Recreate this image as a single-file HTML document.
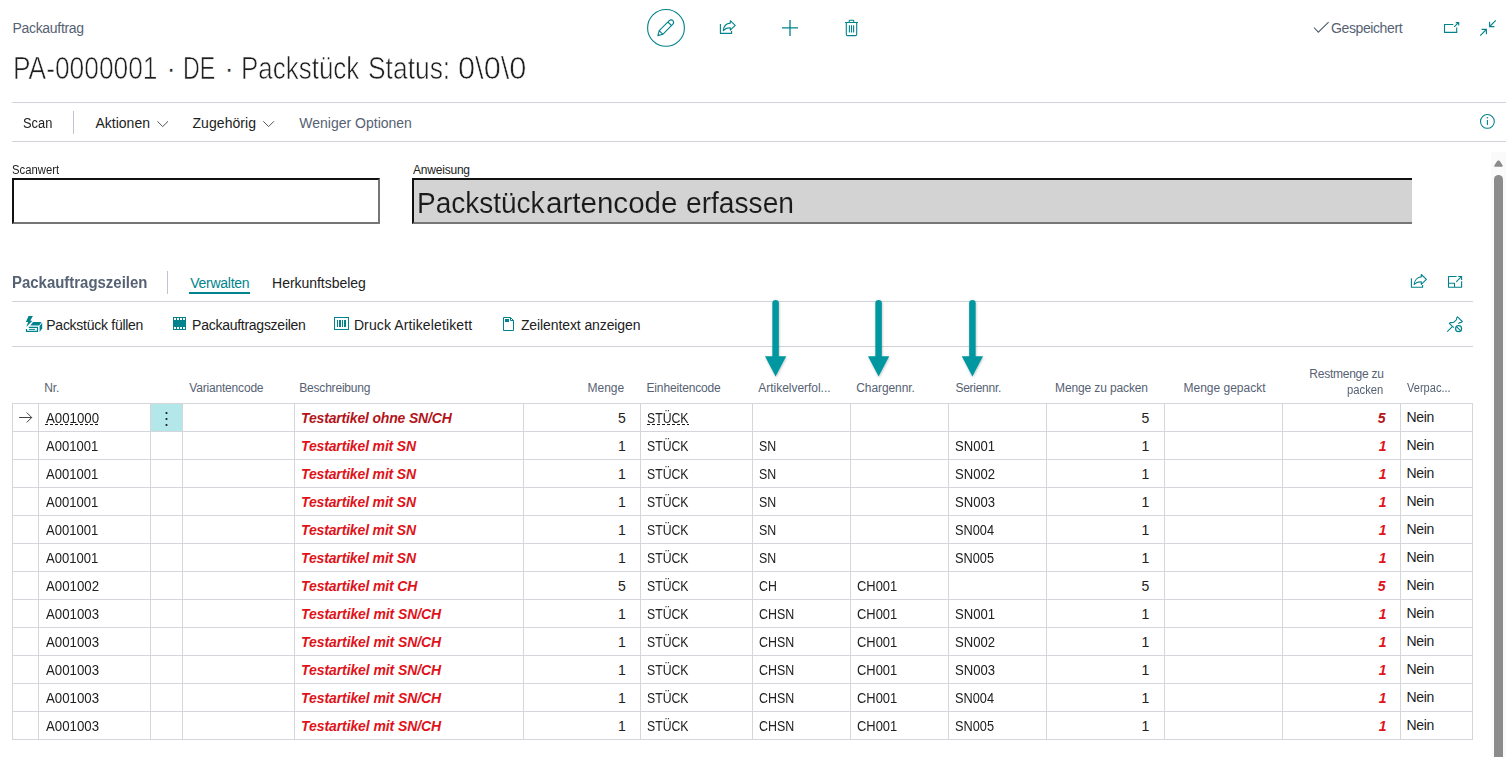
<!DOCTYPE html>
<html lang="de"><head><meta charset="utf-8"><title>Packauftrag</title>
<style>
html,body{margin:0;padding:0;background:#fff;}
body{width:1510px;height:757px;overflow:hidden;font-family:"Liberation Sans",sans-serif;}
#page{position:relative;width:1510px;height:757px;overflow:hidden;background:#fff;}
.t{position:absolute;white-space:nowrap;line-height:normal;}
.nt{position:absolute;}
.hl{position:absolute;height:1px;background:#d3d6db;}
.vl{position:absolute;width:1px;background:#d3d6db;}
svg{position:absolute;overflow:visible;}
.title{-webkit-text-stroke:0.6px #fff;}
h1{margin:0;font-weight:400;font-size:30px}
.ul{position:absolute;height:1px;background:repeating-linear-gradient(90deg,#1a1a1a 0,#1a1a1a 3px,transparent 3px,transparent 5px);}

.big{-webkit-text-stroke:0.12px #d3d3d3;}

</style></head>
<body>
<div id="page">
<div class="nt hl" style="left:12px;top:102px;width:1494px;background:#d0d3da"></div>
<div class="nt hl" style="left:12px;top:141px;width:1494px;background:#d0d3da"></div>
<div class="nt vl" style="left:73px;top:111px;height:23px;background:#bfc4ce"></div>
<div class="nt vl" style="left:167px;top:271px;height:23px;background:#bfc4ce"></div>
<div class="nt hl" style="left:12px;top:301px;width:1461px;background:#d0d3da"></div>
<div class="nt hl" style="left:12px;top:346px;width:1461px;background:#d0d3da"></div>
<div class="nt" style="left:189px;top:292px;width:61px;height:2px;background:#00838c"></div>
<div class="nt" style="left:12px;top:178px;width:364px;height:42px;border-style:solid;border-width:2px;border-color:#111 #767676 #767676 #111;background:#fff"></div>
<div class="nt" style="left:412px;top:178px;width:998px;height:42px;border-style:solid;border-width:2px 0 2px 2px;border-color:#111 #767676 #767676 #111;background:#d3d3d3"></div>
<div class="nt" style="left:151px;top:404px;width:31px;height:27px;background:#b4e7ea"></div>
<div class="nt hl" style="left:12px;top:403px;width:1461px"></div>
<div class="nt hl" style="left:12px;top:431px;width:1461px"></div>
<div class="nt hl" style="left:12px;top:459px;width:1461px"></div>
<div class="nt hl" style="left:12px;top:487px;width:1461px"></div>
<div class="nt hl" style="left:12px;top:515px;width:1461px"></div>
<div class="nt hl" style="left:12px;top:543px;width:1461px"></div>
<div class="nt hl" style="left:12px;top:571px;width:1461px"></div>
<div class="nt hl" style="left:12px;top:599px;width:1461px"></div>
<div class="nt hl" style="left:12px;top:627px;width:1461px"></div>
<div class="nt hl" style="left:12px;top:655px;width:1461px"></div>
<div class="nt hl" style="left:12px;top:683px;width:1461px"></div>
<div class="nt hl" style="left:12px;top:711px;width:1461px"></div>
<div class="nt hl" style="left:12px;top:739px;width:1461px"></div>
<div class="nt vl" style="left:12px;top:403px;height:337px"></div>
<div class="nt vl" style="left:38px;top:403px;height:337px"></div>
<div class="nt vl" style="left:150px;top:403px;height:337px"></div>
<div class="nt vl" style="left:182px;top:403px;height:337px"></div>
<div class="nt vl" style="left:294px;top:403px;height:337px"></div>
<div class="nt vl" style="left:523px;top:403px;height:337px"></div>
<div class="nt vl" style="left:640px;top:403px;height:337px"></div>
<div class="nt vl" style="left:752px;top:403px;height:337px"></div>
<div class="nt vl" style="left:850px;top:403px;height:337px"></div>
<div class="nt vl" style="left:948px;top:403px;height:337px"></div>
<div class="nt vl" style="left:1046px;top:403px;height:337px"></div>
<div class="nt vl" style="left:1164px;top:403px;height:337px"></div>
<div class="nt vl" style="left:1282px;top:403px;height:337px"></div>
<div class="nt vl" style="left:1400px;top:403px;height:337px"></div>
<div class="nt vl" style="left:1472px;top:403px;height:337px"></div>
<div class="nt ul" style="left:45px;top:424px;width:54px"></div>
<div class="nt ul" style="left:647px;top:424px;width:42px"></div>
<svg class="nt" style="left:0;top:0" width="1510" height="757" viewBox="0 0 1510 757" fill="none">
<defs><filter id="sh" x="-50%" y="-10%" width="200%" height="130%"><feDropShadow dx="0.5" dy="1" stdDeviation="1" flood-color="#000" flood-opacity="0.25"/></filter></defs>
<g stroke="#444" stroke-width="1" stroke-linecap="round" stroke-linejoin="round"><path d="M19.5 417.5H31.5M27 412.8L31.7 417.5L27 422.2"/></g>
<g fill="#1a1a1a"><circle cx="166.5" cy="413" r="1.1"/><circle cx="166.5" cy="419" r="1.1"/><circle cx="166.5" cy="425" r="1.1"/></g>
<rect x="1491" y="152" width="15" height="605" fill="#fafafa"/>
<path d="M1495 166L1497.9 161.3H1499.1L1502 166Z" fill="#8b8b8b" stroke="#8b8b8b" stroke-width="1.6" stroke-linejoin="round"/>
<rect x="1494" y="175" width="9" height="600" rx="4.5" fill="#8b8b8b"/>
<g filter="url(#sh)"><path d="M775.6 303.2V360" stroke="#0097a0" stroke-width="6.5" stroke-linecap="round"/><path d="M765.0 356.3H786.2L775.6 376.6Z" fill="#0097a0"/></g>
<g filter="url(#sh)"><path d="M878.6 303.2V360" stroke="#0097a0" stroke-width="6.5" stroke-linecap="round"/><path d="M868.0 356.3H889.2L878.6 376.6Z" fill="#0097a0"/></g>
<g filter="url(#sh)"><path d="M972.4 303.2V360" stroke="#0097a0" stroke-width="6.5" stroke-linecap="round"/><path d="M961.8 356.3H983.0L972.4 376.6Z" fill="#0097a0"/></g>
<g stroke="#00838c" stroke-width="1.1" stroke-linejoin="round" stroke-linecap="round">
<circle cx="666" cy="27.9" r="18.4"/>
<path d="M657.9 35.6L659.2 30.7L669.3 20.6A2.5 2.5 0 0 1 672.9 24.2L662.8 34.3ZM659.2 30.7L662.8 34.3M667.9 22L671.5 25.6"/>
</g>
<g stroke="#00838c" stroke-width="1.1" stroke-linejoin="round">
<path d="M720.4 24V33.4H731.6V31"/>
<path d="M723.3 30.6C723.6 26.2 726.6 23.4 730.3 23.1V20.7L735.2 25.4L730.3 30.1V27.7C727.3 27.6 724.9 28.6 723.3 30.6Z"/>
<path d="M782 27.9H798M790 19.9V35.9" stroke-width="1.3"/>
<path d="M845 22.5H858M849.2 22.5V20.9Q849.2 20.2 849.9 20.2H853.1Q853.8 20.2 853.8 20.9V22.5M846.3 22.5V34.2Q846.3 35.6 847.7 35.6H855.3Q856.7 35.6 856.7 34.2V22.5M849.4 25.2V32.6M851.5 25.2V32.6M853.6 25.2V32.6"/>
</g>
<path d="M1314 27.5L1318.3 32.2L1328.6 22.2" stroke="#505c6d" stroke-width="1.1"/>
<g stroke="#00838c" stroke-width="1.1">
<path d="M1453.3 24.5H1444.5V32.4H1456.7V27.6M1454.2 26.8L1458.5 22.7M1455.7 22.6H1458.7V25.5"/>
<path d="M1495.8 20.3L1489.6 26.5M1489.6 21.8V26.6H1494.4"/><path d="M1480.2 35.7L1486.4 29.5M1481.6 29.4H1486.4V34.2"/>
<circle cx="1487.4" cy="121.4" r="6.9" stroke-width="1.05"/><path d="M1487.4 120V125" stroke-width="1.1"/><circle cx="1487.4" cy="117.7" r="0.8" fill="#00838c" stroke="none"/>
</g>
<g stroke="#555" stroke-width="1"><path d="M157.4 121.3L162.7 126.6L168 121.3"/><path d="M263.3 121.3L268.6 126.6L273.9 121.3"/></g>
<g stroke="#00838c" stroke-width="1.1" stroke-linejoin="round">
<path d="M1411.4 278.2V287.3H1422.6V285"/><path d="M1414.2 284.4C1414.5 280 1417.6 277.2 1421.3 276.9V274.5L1426.4 279.4L1421.3 284.3V281.7C1418.3 281.6 1415.8 282.4 1414.2 284.4Z"/>
<path d="M1456.6 276.5H1448.5V287.3H1461.6V281.3M1458.2 276.5H1461.6V279.9M1456.2 281.8L1461.4 276.7M1448.5 283.2H1454.5V287.3"/>
<path d="M1458.2 323.6C1459.5 322.7 1460.5 322.4 1461.4 322.4L1462.3 321.5L1457.5 316.9L1456.7 317.8C1456.8 318.8 1456.7 319.4 1456.3 319.9L1453.7 322.3C1452.5 322.7 1451.2 322.6 1450.2 322.6L1449.3 323.4L1453.8 327.7M1452.1 326.9L1447.2 331.6"/><circle cx="1458.6" cy="328.7" r="3" stroke-width="1.2"/><path d="M1456.4 326.6L1460.8 330.8"/>
</g>
<g fill="#00838c">
<path d="M28.5 315.9H32.9L30.3 320.5L32.2 320.9L26.2 326.9L28.2 321.9H25.9Z"/>
<path d="M33 322.1H41.5L39.2 325.4H30.4Z"/><path d="M42.2 322.7V328.5L39.6 331.9V326.1Z"/>
<path d="M26.5 328.9V331.4H37.5V327.4H28.8" fill="none" stroke="#00838c" stroke-width="1.2"/><path d="M29.1 329.4H35" fill="none" stroke="#00838c" stroke-width="1"/>
<path d="M173 317H186V330H173ZM174 318h2v2h-2ZM177 318h2v2h-2ZM180 318h2v2h-2ZM183 318h2v2h-2ZM174 327h2v2h-2ZM177 327h2v2h-2ZM180 327h2v2h-2ZM183 327h2v2h-2Z" fill-rule="evenodd"/>
<path d="M337 320h1v7h-1ZM339 320h2v7h-2ZM342 320h1v7h-1ZM344 320h2v7h-2Z"/>
<rect x="505" y="319" width="4" height="3"/>
</g>
<g stroke="#00838c" stroke-width="1">
<rect x="334.5" y="317.5" width="14" height="12"/>
<path d="M503.5 317.5H510.5L513.5 320.5V330.5H503.5ZM510.5 317.5V320.5H513.5"/>
</g>
</svg>
<span id="t0" class="t " style="top:20.00px;font-size:14.00px;color:#566273;left:12.50px;letter-spacing:-0.315px;">Packauftrag</span>
<h1 class="nt0"><span id="t1" class="t title sx" style="top:51.00px;font-size:31.00px;color:#1f1f1f;left:13.30px;transform:scaleX(0.8495);transform-origin:0 50%;">PA-0000001</span>
<span id="t2" class="t title" style="top:51.00px;font-size:31.00px;color:#1f1f1f;left:166.10px;">·</span>
<span id="t3" class="t title sx" style="top:51.00px;font-size:31.00px;color:#1f1f1f;left:183.30px;transform:scaleX(0.7491);transform-origin:0 50%;">DE</span>
<span id="t4" class="t title" style="top:51.00px;font-size:31.00px;color:#1f1f1f;left:223.90px;">·</span>
<span id="t5" class="t title sx" style="top:51.00px;font-size:31.00px;color:#1f1f1f;left:241.10px;transform:scaleX(0.8371);transform-origin:0 50%;">Packstück</span>
<span id="t6" class="t title sx" style="top:51.00px;font-size:31.00px;color:#1f1f1f;left:368.30px;transform:scaleX(0.8518);transform-origin:0 50%;">Status:</span>
<span id="t7" class="t title sx" style="top:51.00px;font-size:31.00px;color:#1f1f1f;left:458.10px;transform:scaleX(0.9928);transform-origin:0 50%;">0\0\0</span></h1>
<span id="t8" class="t sx" style="top:115.00px;font-size:14.00px;color:#212121;left:22.50px;transform:scaleX(0.9199);transform-origin:0 50%;">Scan</span>
<span id="t9" class="t " style="top:115.00px;font-size:14.00px;color:#212121;left:95.50px;">Aktionen</span>
<span id="t10" class="t " style="top:115.00px;font-size:14.00px;color:#212121;left:192.50px;letter-spacing:0.056px;">Zugehörig</span>
<span id="t11" class="t " style="top:115.00px;font-size:14.00px;color:#566273;left:299.30px;letter-spacing:0.000px;">Weniger Optionen</span>
<span id="t12" class="t " style="top:20.00px;font-size:14.00px;color:#566273;left:1331.10px;letter-spacing:-0.405px;">Gespeichert</span>
<span id="t13" class="t " style="top:163.00px;font-size:12.00px;color:#212121;left:12.10px;transform:scaleX(0.9413);transform-origin:0 50%;">Scanwert</span>
<span id="t14" class="t " style="top:163.00px;font-size:12.00px;color:#212121;left:413.10px;letter-spacing:-0.225px;">Anweisung</span>
<div class="nt0"><span id="t15" class="t big sx" style="top:186.00px;font-size:30.00px;color:#1a1a1a;left:416.90px;transform:scaleX(0.9333);transform-origin:0 50%;">Packstück</span><span id="t16" class="t big sx" style="top:186.00px;font-size:30.00px;color:#1a1a1a;left:545.90px;transform:scaleX(0.9850);transform-origin:0 50%;">artencode</span>
<span id="t17" class="t big sx" style="top:186.00px;font-size:30.00px;color:#1a1a1a;left:686.10px;transform:scaleX(0.9381);transform-origin:0 50%;">erfassen</span></div>
<span id="t18" class="t " style="top:274.00px;font-size:16.00px;color:#566273;left:12.10px;transform:scaleX(0.9339);transform-origin:0 50%;font-weight:700;">Packauftragszeilen</span>
<span id="t19" class="t " style="top:275.00px;font-size:14.00px;color:#00838c;left:190.30px;letter-spacing:-0.281px;">Verwalten</span>
<span id="t20" class="t " style="top:275.00px;font-size:14.00px;color:#212121;left:272.10px;letter-spacing:-0.035px;">Herkunftsbeleg</span>
<span id="t21" class="t " style="top:317.00px;font-size:14.00px;color:#212121;left:46.30px;letter-spacing:-0.270px;">Packstück füllen</span>
<span id="t22" class="t " style="top:317.00px;font-size:14.00px;color:#212121;left:192.10px;letter-spacing:-0.265px;">Packauftragszeilen</span>
<span id="t23" class="t " style="top:317.00px;font-size:14.00px;color:#212121;left:353.90px;letter-spacing:0.118px;">Druck Artikeletikett</span>
<span id="t24" class="t " style="top:317.00px;font-size:14.00px;color:#212121;left:520.90px;letter-spacing:-0.100px;">Zeilentext anzeigen</span>
<span id="t25" class="t h" style="top:381.00px;font-size:12.00px;color:#566273;left:44.30px;letter-spacing:-0.114px;">Nr.</span>
<span id="t26" class="t h" style="top:381.00px;font-size:12.00px;color:#566273;left:189.30px;letter-spacing:-0.188px;">Variantencode</span>
<span id="t27" class="t h" style="top:381.00px;font-size:12.00px;color:#566273;left:299.30px;letter-spacing:-0.205px;">Beschreibung</span>
<span id="t28" class="t h" style="top:381.00px;font-size:12.00px;color:#566273;left:587.50px;letter-spacing:0.000px;">Menge</span>
<span id="t29" class="t h" style="top:381.00px;font-size:12.00px;color:#566273;left:646.50px;letter-spacing:-0.150px;">Einheitencode</span>
<span id="t30" class="t h" style="top:381.00px;font-size:12.00px;color:#566273;left:758.30px;letter-spacing:-0.030px;">Artikelverfol...</span>
<span id="t31" class="t h" style="top:381.00px;font-size:12.00px;color:#566273;left:856.30px;letter-spacing:-0.100px;">Chargennr.</span>
<span id="t32" class="t h" style="top:381.00px;font-size:12.00px;color:#566273;left:955.50px;letter-spacing:-0.281px;">Seriennr.</span>
<span id="t33" class="t h" style="top:381.00px;font-size:12.00px;color:#566273;left:1055.10px;letter-spacing:-0.129px;">Menge zu packen</span>
<span id="t34" class="t h" style="top:381.00px;font-size:12.00px;color:#566273;left:1183.50px;">Menge gepackt</span>
<span id="t35" class="t h" style="top:367.00px;font-size:12.00px;color:#566273;left:1309.30px;letter-spacing:-0.245px;">Restmenge zu</span>
<span id="t36" class="t h" style="top:383.00px;font-size:12.00px;color:#566273;left:1346.90px;transform:scaleX(0.9385);transform-origin:0 50%;">packen</span>
<span id="t37" class="t h" style="top:381.00px;font-size:12.00px;color:#566273;left:1407.10px;transform:scaleX(0.9208);transform-origin:0 50%;">Verpac...</span>
<span id="t38" class="t c" style="top:410.00px;font-size:14.00px;color:#212121;left:45.90px;transform:scaleX(0.9475);transform-origin:0 50%;">A001000</span>
<span id="t39" class="t d" style="top:410.00px;font-size:14.00px;color:#b3151a;left:301.10px;letter-spacing:-0.171px;font-weight:700;font-style:italic;">Testartikel ohne SN/CH</span>
<span id="t40" class="t n" style="top:410.00px;font-size:14.00px;color:#212121;right:884.30px;">5</span>
<span id="t41" class="t c" style="top:410.00px;font-size:14.00px;color:#212121;left:647.30px;transform:scaleX(0.8755);transform-origin:0 50%;">STÜCK</span>
<span id="t42" class="t n" style="top:410.00px;font-size:14.00px;color:#212121;right:360.70px;">5</span>
<span id="t43" class="t rn" style="top:410.00px;font-size:14.00px;color:#b3151a;right:124.50px;font-weight:700;font-style:italic;">5</span>
<span id="t44" class="t c" style="top:409.00px;font-size:14.00px;color:#212121;left:1406.50px;letter-spacing:-0.300px;">Nein</span>
<span id="t45" class="t c" style="top:438.00px;font-size:14.00px;color:#212121;left:45.90px;transform:scaleX(0.9322);transform-origin:0 50%;">A001001</span>
<span id="t46" class="t d" style="top:438.00px;font-size:14.00px;color:#e0131a;left:301.10px;letter-spacing:-0.159px;font-weight:700;font-style:italic;">Testartikel mit SN</span>
<span id="t47" class="t n" style="top:438.00px;font-size:14.00px;color:#212121;right:884.30px;">1</span>
<span id="t48" class="t c" style="top:438.00px;font-size:14.00px;color:#212121;left:647.30px;transform:scaleX(0.8755);transform-origin:0 50%;">STÜCK</span>
<span id="t49" class="t c" style="top:438.00px;font-size:14.00px;color:#212121;left:759.10px;transform:scaleX(0.8842);transform-origin:0 50%;">SN</span>
<span id="t50" class="t c" style="top:438.00px;font-size:14.00px;color:#212121;left:954.70px;transform:scaleX(0.9356);transform-origin:0 50%;">SN001</span>
<span id="t51" class="t n" style="top:438.00px;font-size:14.00px;color:#212121;right:360.70px;">1</span>
<span id="t52" class="t rn" style="top:438.00px;font-size:14.00px;color:#e0131a;right:123.50px;font-weight:700;font-style:italic;">1</span>
<span id="t53" class="t c" style="top:437.00px;font-size:14.00px;color:#212121;left:1406.50px;letter-spacing:-0.300px;">Nein</span>
<span id="t54" class="t c" style="top:466.00px;font-size:14.00px;color:#212121;left:45.90px;transform:scaleX(0.9322);transform-origin:0 50%;">A001001</span>
<span id="t55" class="t d" style="top:466.00px;font-size:14.00px;color:#e0131a;left:301.10px;letter-spacing:-0.159px;font-weight:700;font-style:italic;">Testartikel mit SN</span>
<span id="t56" class="t n" style="top:466.00px;font-size:14.00px;color:#212121;right:884.30px;">1</span>
<span id="t57" class="t c" style="top:466.00px;font-size:14.00px;color:#212121;left:647.30px;transform:scaleX(0.8755);transform-origin:0 50%;">STÜCK</span>
<span id="t58" class="t c" style="top:466.00px;font-size:14.00px;color:#212121;left:759.10px;transform:scaleX(0.8842);transform-origin:0 50%;">SN</span>
<span id="t59" class="t c" style="top:466.00px;font-size:14.00px;color:#212121;left:954.70px;transform:scaleX(0.9356);transform-origin:0 50%;">SN002</span>
<span id="t60" class="t n" style="top:466.00px;font-size:14.00px;color:#212121;right:360.70px;">1</span>
<span id="t61" class="t rn" style="top:466.00px;font-size:14.00px;color:#e0131a;right:123.50px;font-weight:700;font-style:italic;">1</span>
<span id="t62" class="t c" style="top:465.00px;font-size:14.00px;color:#212121;left:1406.50px;letter-spacing:-0.300px;">Nein</span>
<span id="t63" class="t c" style="top:494.00px;font-size:14.00px;color:#212121;left:45.90px;transform:scaleX(0.9322);transform-origin:0 50%;">A001001</span>
<span id="t64" class="t d" style="top:494.00px;font-size:14.00px;color:#e0131a;left:301.10px;letter-spacing:-0.159px;font-weight:700;font-style:italic;">Testartikel mit SN</span>
<span id="t65" class="t n" style="top:494.00px;font-size:14.00px;color:#212121;right:884.30px;">1</span>
<span id="t66" class="t c" style="top:494.00px;font-size:14.00px;color:#212121;left:647.30px;transform:scaleX(0.8755);transform-origin:0 50%;">STÜCK</span>
<span id="t67" class="t c" style="top:494.00px;font-size:14.00px;color:#212121;left:759.10px;transform:scaleX(0.8842);transform-origin:0 50%;">SN</span>
<span id="t68" class="t c" style="top:494.00px;font-size:14.00px;color:#212121;left:954.70px;transform:scaleX(0.9356);transform-origin:0 50%;">SN003</span>
<span id="t69" class="t n" style="top:494.00px;font-size:14.00px;color:#212121;right:360.70px;">1</span>
<span id="t70" class="t rn" style="top:494.00px;font-size:14.00px;color:#e0131a;right:123.50px;font-weight:700;font-style:italic;">1</span>
<span id="t71" class="t c" style="top:493.00px;font-size:14.00px;color:#212121;left:1406.50px;letter-spacing:-0.300px;">Nein</span>
<span id="t72" class="t c" style="top:522.00px;font-size:14.00px;color:#212121;left:45.90px;transform:scaleX(0.9322);transform-origin:0 50%;">A001001</span>
<span id="t73" class="t d" style="top:522.00px;font-size:14.00px;color:#e0131a;left:301.10px;letter-spacing:-0.159px;font-weight:700;font-style:italic;">Testartikel mit SN</span>
<span id="t74" class="t n" style="top:522.00px;font-size:14.00px;color:#212121;right:884.30px;">1</span>
<span id="t75" class="t c" style="top:522.00px;font-size:14.00px;color:#212121;left:647.30px;transform:scaleX(0.8755);transform-origin:0 50%;">STÜCK</span>
<span id="t76" class="t c" style="top:522.00px;font-size:14.00px;color:#212121;left:759.10px;transform:scaleX(0.8842);transform-origin:0 50%;">SN</span>
<span id="t77" class="t c" style="top:522.00px;font-size:14.00px;color:#212121;left:954.70px;transform:scaleX(0.9116);transform-origin:0 50%;">SN004</span>
<span id="t78" class="t n" style="top:522.00px;font-size:14.00px;color:#212121;right:360.70px;">1</span>
<span id="t79" class="t rn" style="top:522.00px;font-size:14.00px;color:#e0131a;right:123.50px;font-weight:700;font-style:italic;">1</span>
<span id="t80" class="t c" style="top:521.00px;font-size:14.00px;color:#212121;left:1406.50px;letter-spacing:-0.300px;">Nein</span>
<span id="t81" class="t c" style="top:550.00px;font-size:14.00px;color:#212121;left:45.90px;transform:scaleX(0.9322);transform-origin:0 50%;">A001001</span>
<span id="t82" class="t d" style="top:550.00px;font-size:14.00px;color:#e0131a;left:301.10px;letter-spacing:-0.159px;font-weight:700;font-style:italic;">Testartikel mit SN</span>
<span id="t83" class="t n" style="top:550.00px;font-size:14.00px;color:#212121;right:884.30px;">1</span>
<span id="t84" class="t c" style="top:550.00px;font-size:14.00px;color:#212121;left:647.30px;transform:scaleX(0.8755);transform-origin:0 50%;">STÜCK</span>
<span id="t85" class="t c" style="top:550.00px;font-size:14.00px;color:#212121;left:759.10px;transform:scaleX(0.8842);transform-origin:0 50%;">SN</span>
<span id="t86" class="t c" style="top:550.00px;font-size:14.00px;color:#212121;left:954.70px;transform:scaleX(0.9116);transform-origin:0 50%;">SN005</span>
<span id="t87" class="t n" style="top:550.00px;font-size:14.00px;color:#212121;right:360.70px;">1</span>
<span id="t88" class="t rn" style="top:550.00px;font-size:14.00px;color:#e0131a;right:123.50px;font-weight:700;font-style:italic;">1</span>
<span id="t89" class="t c" style="top:549.00px;font-size:14.00px;color:#212121;left:1406.50px;letter-spacing:-0.300px;">Nein</span>
<span id="t90" class="t c" style="top:578.00px;font-size:14.00px;color:#212121;left:45.90px;transform:scaleX(0.9465);transform-origin:0 50%;">A001002</span>
<span id="t91" class="t d" style="top:578.00px;font-size:14.00px;color:#e0131a;left:301.10px;letter-spacing:-0.132px;font-weight:700;font-style:italic;">Testartikel mit CH</span>
<span id="t92" class="t n" style="top:578.00px;font-size:14.00px;color:#212121;right:884.30px;">5</span>
<span id="t93" class="t c" style="top:578.00px;font-size:14.00px;color:#212121;left:647.30px;transform:scaleX(0.8755);transform-origin:0 50%;">STÜCK</span>
<span id="t94" class="t c" style="top:578.00px;font-size:14.00px;color:#212121;left:758.50px;transform:scaleX(0.8801);transform-origin:0 50%;">CH</span>
<span id="t95" class="t c" style="top:578.00px;font-size:14.00px;color:#212121;left:856.90px;transform:scaleX(0.9227);transform-origin:0 50%;">CH001</span>
<span id="t96" class="t n" style="top:578.00px;font-size:14.00px;color:#212121;right:360.70px;">5</span>
<span id="t97" class="t rn" style="top:578.00px;font-size:14.00px;color:#e0131a;right:124.50px;font-weight:700;font-style:italic;">5</span>
<span id="t98" class="t c" style="top:577.00px;font-size:14.00px;color:#212121;left:1406.50px;letter-spacing:-0.300px;">Nein</span>
<span id="t99" class="t c" style="top:606.00px;font-size:14.00px;color:#212121;left:45.90px;transform:scaleX(0.9465);transform-origin:0 50%;">A001003</span>
<span id="t100" class="t d" style="top:606.00px;font-size:14.00px;color:#e0131a;left:301.10px;letter-spacing:-0.090px;font-weight:700;font-style:italic;">Testartikel mit SN/CH</span>
<span id="t101" class="t n" style="top:606.00px;font-size:14.00px;color:#212121;right:884.30px;">1</span>
<span id="t102" class="t c" style="top:606.00px;font-size:14.00px;color:#212121;left:647.30px;transform:scaleX(0.8755);transform-origin:0 50%;">STÜCK</span>
<span id="t103" class="t c" style="top:606.00px;font-size:14.00px;color:#212121;left:758.50px;transform:scaleX(0.8882);transform-origin:0 50%;">CHSN</span>
<span id="t104" class="t c" style="top:606.00px;font-size:14.00px;color:#212121;left:856.90px;transform:scaleX(0.9227);transform-origin:0 50%;">CH001</span>
<span id="t105" class="t c" style="top:606.00px;font-size:14.00px;color:#212121;left:954.70px;transform:scaleX(0.9356);transform-origin:0 50%;">SN001</span>
<span id="t106" class="t n" style="top:606.00px;font-size:14.00px;color:#212121;right:360.70px;">1</span>
<span id="t107" class="t rn" style="top:606.00px;font-size:14.00px;color:#e0131a;right:123.50px;font-weight:700;font-style:italic;">1</span>
<span id="t108" class="t c" style="top:605.00px;font-size:14.00px;color:#212121;left:1406.50px;letter-spacing:-0.300px;">Nein</span>
<span id="t109" class="t c" style="top:634.00px;font-size:14.00px;color:#212121;left:45.90px;transform:scaleX(0.9465);transform-origin:0 50%;">A001003</span>
<span id="t110" class="t d" style="top:634.00px;font-size:14.00px;color:#e0131a;left:301.10px;letter-spacing:-0.090px;font-weight:700;font-style:italic;">Testartikel mit SN/CH</span>
<span id="t111" class="t n" style="top:634.00px;font-size:14.00px;color:#212121;right:884.30px;">1</span>
<span id="t112" class="t c" style="top:634.00px;font-size:14.00px;color:#212121;left:647.30px;transform:scaleX(0.8755);transform-origin:0 50%;">STÜCK</span>
<span id="t113" class="t c" style="top:634.00px;font-size:14.00px;color:#212121;left:758.50px;transform:scaleX(0.8882);transform-origin:0 50%;">CHSN</span>
<span id="t114" class="t c" style="top:634.00px;font-size:14.00px;color:#212121;left:856.90px;transform:scaleX(0.9227);transform-origin:0 50%;">CH001</span>
<span id="t115" class="t c" style="top:634.00px;font-size:14.00px;color:#212121;left:954.70px;transform:scaleX(0.9356);transform-origin:0 50%;">SN002</span>
<span id="t116" class="t n" style="top:634.00px;font-size:14.00px;color:#212121;right:360.70px;">1</span>
<span id="t117" class="t rn" style="top:634.00px;font-size:14.00px;color:#e0131a;right:123.50px;font-weight:700;font-style:italic;">1</span>
<span id="t118" class="t c" style="top:633.00px;font-size:14.00px;color:#212121;left:1406.50px;letter-spacing:-0.300px;">Nein</span>
<span id="t119" class="t c" style="top:662.00px;font-size:14.00px;color:#212121;left:45.90px;transform:scaleX(0.9465);transform-origin:0 50%;">A001003</span>
<span id="t120" class="t d" style="top:662.00px;font-size:14.00px;color:#e0131a;left:301.10px;letter-spacing:-0.090px;font-weight:700;font-style:italic;">Testartikel mit SN/CH</span>
<span id="t121" class="t n" style="top:662.00px;font-size:14.00px;color:#212121;right:884.30px;">1</span>
<span id="t122" class="t c" style="top:662.00px;font-size:14.00px;color:#212121;left:647.30px;transform:scaleX(0.8755);transform-origin:0 50%;">STÜCK</span>
<span id="t123" class="t c" style="top:662.00px;font-size:14.00px;color:#212121;left:758.50px;transform:scaleX(0.8882);transform-origin:0 50%;">CHSN</span>
<span id="t124" class="t c" style="top:662.00px;font-size:14.00px;color:#212121;left:856.90px;transform:scaleX(0.9227);transform-origin:0 50%;">CH001</span>
<span id="t125" class="t c" style="top:662.00px;font-size:14.00px;color:#212121;left:954.70px;transform:scaleX(0.9356);transform-origin:0 50%;">SN003</span>
<span id="t126" class="t n" style="top:662.00px;font-size:14.00px;color:#212121;right:360.70px;">1</span>
<span id="t127" class="t rn" style="top:662.00px;font-size:14.00px;color:#e0131a;right:123.50px;font-weight:700;font-style:italic;">1</span>
<span id="t128" class="t c" style="top:661.00px;font-size:14.00px;color:#212121;left:1406.50px;letter-spacing:-0.300px;">Nein</span>
<span id="t129" class="t c" style="top:690.00px;font-size:14.00px;color:#212121;left:45.90px;transform:scaleX(0.9465);transform-origin:0 50%;">A001003</span>
<span id="t130" class="t d" style="top:690.00px;font-size:14.00px;color:#e0131a;left:301.10px;letter-spacing:-0.090px;font-weight:700;font-style:italic;">Testartikel mit SN/CH</span>
<span id="t131" class="t n" style="top:690.00px;font-size:14.00px;color:#212121;right:884.30px;">1</span>
<span id="t132" class="t c" style="top:690.00px;font-size:14.00px;color:#212121;left:647.30px;transform:scaleX(0.8755);transform-origin:0 50%;">STÜCK</span>
<span id="t133" class="t c" style="top:690.00px;font-size:14.00px;color:#212121;left:758.50px;transform:scaleX(0.8882);transform-origin:0 50%;">CHSN</span>
<span id="t134" class="t c" style="top:690.00px;font-size:14.00px;color:#212121;left:856.90px;transform:scaleX(0.9227);transform-origin:0 50%;">CH001</span>
<span id="t135" class="t c" style="top:690.00px;font-size:14.00px;color:#212121;left:954.70px;transform:scaleX(0.9116);transform-origin:0 50%;">SN004</span>
<span id="t136" class="t n" style="top:690.00px;font-size:14.00px;color:#212121;right:360.70px;">1</span>
<span id="t137" class="t rn" style="top:690.00px;font-size:14.00px;color:#e0131a;right:123.50px;font-weight:700;font-style:italic;">1</span>
<span id="t138" class="t c" style="top:689.00px;font-size:14.00px;color:#212121;left:1406.50px;letter-spacing:-0.300px;">Nein</span>
<span id="t139" class="t c" style="top:718.00px;font-size:14.00px;color:#212121;left:45.90px;transform:scaleX(0.9465);transform-origin:0 50%;">A001003</span>
<span id="t140" class="t d" style="top:718.00px;font-size:14.00px;color:#e0131a;left:301.10px;letter-spacing:-0.090px;font-weight:700;font-style:italic;">Testartikel mit SN/CH</span>
<span id="t141" class="t n" style="top:718.00px;font-size:14.00px;color:#212121;right:884.30px;">1</span>
<span id="t142" class="t c" style="top:718.00px;font-size:14.00px;color:#212121;left:647.30px;transform:scaleX(0.8755);transform-origin:0 50%;">STÜCK</span>
<span id="t143" class="t c" style="top:718.00px;font-size:14.00px;color:#212121;left:758.50px;transform:scaleX(0.8882);transform-origin:0 50%;">CHSN</span>
<span id="t144" class="t c" style="top:718.00px;font-size:14.00px;color:#212121;left:856.90px;transform:scaleX(0.9227);transform-origin:0 50%;">CH001</span>
<span id="t145" class="t c" style="top:718.00px;font-size:14.00px;color:#212121;left:954.70px;transform:scaleX(0.9116);transform-origin:0 50%;">SN005</span>
<span id="t146" class="t n" style="top:718.00px;font-size:14.00px;color:#212121;right:360.70px;">1</span>
<span id="t147" class="t rn" style="top:718.00px;font-size:14.00px;color:#e0131a;right:123.50px;font-weight:700;font-style:italic;">1</span>
<span id="t148" class="t c" style="top:717.00px;font-size:14.00px;color:#212121;left:1406.50px;letter-spacing:-0.300px;">Nein</span>
</div>
</body></html>
